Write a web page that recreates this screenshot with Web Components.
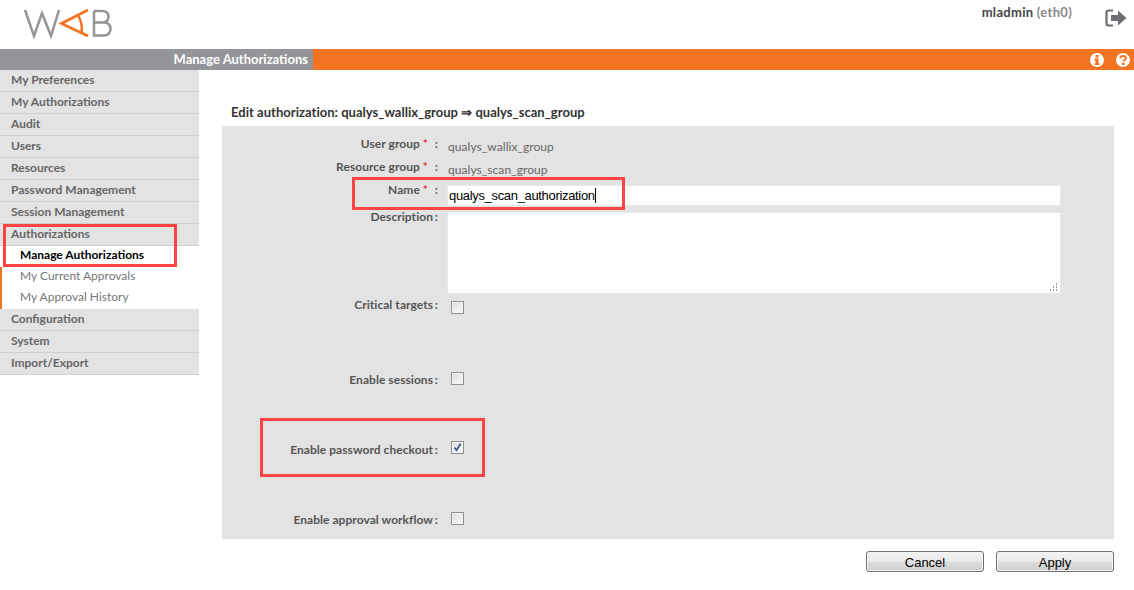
<!DOCTYPE html>
<html>
<head>
<meta charset="utf-8">
<title>WAB</title>
<style>
  html, body { margin: 0; padding: 0; background: #fff; }
  body { width: 1134px; height: 590px; overflow: hidden; position: relative; font-family: "Lato", "Open Sans", sans-serif; }
</style>
</head>
<body>
<wab-app></wab-app>

<template id="form-row-tpl">
  <style>
    :host { display: grid; grid-template-columns: 211px 5px 1fr; height: var(--h, 23px); font: 700 12px/14px "Lato", sans-serif; color: #555; letter-spacing: .05px; }
    .label { text-align: right; padding-top: var(--lt, 4px); white-space: nowrap; }
    .label b { color: #e03030; font-weight: 700; }
    :host([required]) .label { padding-right: 5px; }
    .colon { padding-top: var(--lt, 4px); text-align: right; }
    .value { padding-left: 9px; padding-top: var(--vt, 7px); }
  </style>
  <div class="label"></div>
  <div class="colon">:</div>
  <div class="value"><slot></slot></div>
</template>

<script>
class FormRow extends HTMLElement {
  constructor() {
    super();
    this.attachShadow({ mode: 'open' });
    this.shadowRoot.appendChild(document.getElementById('form-row-tpl').content.cloneNode(true));
  }
  connectedCallback() {
    const label = this.shadowRoot.querySelector('.label');
    label.textContent = this.getAttribute('label');
    if (this.hasAttribute('required')) {
      const star = document.createElement('b');
      star.textContent = ' *';
      label.appendChild(star);
    }
  }
}
customElements.define('form-row', FormRow);

class WabCheck extends HTMLElement {
  constructor() {
    super();
    this.attachShadow({ mode: 'open' });
    this.shadowRoot.innerHTML = `
    <style>
      :host { display: block; width: 13px; height: 13px; box-sizing: border-box; border: 1px solid #8e8f8f; background: linear-gradient(135deg, #dcdcdc, #fbfbfb); box-shadow: inset 0 0 0 1px #f4f4f4; }
      svg { display: block; }
    </style>
    ${this.hasAttribute('checked') ? '<svg width="11" height="11" viewBox="0 0 11 11"><path d="M2.5 5.5L4.6 8.3L8.6 1.8" fill="none" stroke="#3d4f8e" stroke-width="1.7"/></svg>' : ''}`;
  }
}
customElements.define('wab-check', WabCheck);

class WabButton extends HTMLElement {
  constructor() {
    super();
    this.attachShadow({ mode: 'open' });
    this.shadowRoot.innerHTML = `
    <style>
      :host { display: block; width: 118px; height: 21px; box-sizing: border-box; border: 1px solid #707070; border-radius: 3px; background: linear-gradient(#f2f2f2 0, #ebebeb 48%, #dcdcdc 52%, #cfcfcf 100%); box-shadow: inset 0 0 0 1px #f6f6f6; font: 13px/21px "Liberation Sans", sans-serif; color: #000; text-align: center; }
    </style>
    <slot></slot>`;
  }
}
customElements.define('wab-button', WabButton);

class SideMenu extends HTMLElement {
  constructor() {
    super();
    this.attachShadow({ mode: 'open' });
    const main = ['My Preferences', 'My Authorizations', 'Audit', 'Users', 'Resources', 'Password Management', 'Session Management', 'Authorizations'];
    const sub = ['Manage Authorizations', 'My Current Approvals', 'My Approval History'];
    const rest = ['Configuration', 'System', 'Import/Export'];
    const head = t => `<div class="head">${t}</div>`;
    this.shadowRoot.innerHTML = `
    <style>
      :host { display: block; width: 199px; flex: none; font: 700 12px/14px "Lato", sans-serif; }
      .head { height: 22px; box-sizing: border-box; padding: 3px 0 0 11px; background: #e3e3e3; border-bottom: 1px solid #cfcfcf; color: #666; }
      .sub { height: 21px; box-sizing: border-box; padding: 2px 0 0 18px; border-left: 2px solid #f47321; color: #777; font-weight: 400; }
      .sub.on { color: #000; font-weight: 700; border-left-color: transparent; }
    </style>
    ${main.map(head).join('')}
    ${sub.map((t, i) => `<div class="sub${i ? '' : ' on'}">${t}</div>`).join('')}
    ${rest.map(head).join('')}`;
  }
}
customElements.define('side-menu', SideMenu);

class TopHeader extends HTMLElement {
  constructor() {
    super();
    this.attachShadow({ mode: 'open' });
    this.shadowRoot.innerHTML = `
    <style>
      :host { display: flex; height: 49px; justify-content: space-between; font: 700 13px/14px "Lato", sans-serif; }
      .logo { margin: 8px 0 0 23px; display: block; }
      .right { display: flex; align-items: flex-start; }
      .user { margin: 5px 33px 0 0; color: #444; letter-spacing: .3px; }
      .user span { color: #888; }
      .out { margin: 9px 7px 0 0; display: block; }
    </style>
    <svg class="logo" width="90" height="31" viewBox="0 0 90 31">
      <path d="M2 2L11 28L19 5L28 28L36 2" fill="none" stroke="#939598" stroke-width="2.500"/>
      <path d="M65 2L38.500 15.500L65 28" fill="none" stroke="#f47321" stroke-width="2.800"/>
      <path d="M55 7Q60 16 58.500 25" fill="none" stroke="#f47321" stroke-width="2.500"/>
      <path d="M71 3V27.500H80Q87.500 27.500 87.500 21Q87.500 14.500 80 14.500H71M80 14.500Q85.500 14 85.500 8.500Q85.500 3 79 3H71" fill="none" stroke="#939598" stroke-width="2.500"/>
    </svg>
    <div class="right">
      <div class="user">mladmin <span>(eth0)</span></div>
      <svg class="out" width="22" height="18" viewBox="0 0 22 18">
        <path d="M8 1.500H3.500Q1.500 1.500 1.500 3.500V14.500Q1.500 16.500 3.500 16.500H8" fill="none" stroke="#6d6e71" stroke-width="2.200"/>
        <path d="M6 6H13V1.500L21.500 9L13 16.500V12H6Z" fill="#6d6e71"/>
      </svg>
    </div>`;
  }
}
customElements.define('top-header', TopHeader);

class TitleBar extends HTMLElement {
  constructor() {
    super();
    this.attachShadow({ mode: 'open' });
    this.shadowRoot.innerHTML = `
    <style>
      :host { display: flex; height: 21px; background: #f47321; font: 700 13px/20px "Lato", sans-serif; color: #fff; }
      .crumb { width: 313px; box-sizing: border-box; background: #939598; text-align: right; padding-right: 5px; }
      .icons { margin-left: auto; display: flex; gap: 12px; padding: 4px 4px 0 0; }
      svg { display: block; }
    </style>
    <div class="crumb">Manage Authorizations</div>
    <div class="icons">
      <svg width="14" height="14" viewBox="0 0 14 14"><circle cx="7" cy="7" r="7" fill="#fff"/><rect x="5.500" y="2" width="3" height="2.500" fill="#f47321"/><path d="M4.500 5.500H8.500V10.200H9.500V12H4.500V10.200H5.500V7.300H4.500Z" fill="#f47321"/></svg>
      <svg width="14" height="14" viewBox="0 0 14 14"><circle cx="7" cy="7" r="7" fill="#fff"/><path d="M4.200 5.300Q4.500 3 7.100 3Q9.800 3 9.800 5.200Q9.800 6.500 8.300 7.200Q7.400 7.700 7.400 8.600" fill="none" stroke="#f47321" stroke-width="2"/><rect x="5.900" y="9.700" width="2.600" height="2.300" fill="#f47321"/></svg>
    </div>`;
  }
}
customElements.define('title-bar', TitleBar);

class AuthForm extends HTMLElement {
  constructor() {
    super();
    this.attachShadow({ mode: 'open' });
    this.shadowRoot.innerHTML = `
    <style>
      :host { display: block; flex: 1; padding: 35px 20px 0 23px; font: 700 12px/14px "Lato", sans-serif; }
      h2 { margin: 0; padding-left: 9px; font: 700 13px/14px "Lato", sans-serif; color: #333; height: 21px; letter-spacing: .03px; }
      .panel { background: #e3e3e3; height: 413px; padding-top: 7px; box-sizing: border-box; }
      .static { display: block; padding-left: 1px; font: 400 12px/14px "Lato", sans-serif; color: #666; }
      .input { box-sizing: border-box; width: 614px; background: #fff; border: 1px solid #e9e9e9; font: 13px/19px "Liberation Sans", sans-serif; color: #000; padding-left: 1px; letter-spacing: -.33px; }
      .line { height: 21px; margin-top: 6px; }
      .line i { display: inline-block; width: 1px; height: 15px; background: #000; vertical-align: -3px; }
      .area { height: 82px; position: relative; }
      .grip { position: absolute; right: 2px; bottom: 2px; }
      wab-check { margin-left: 4px; margin-top: var(--ct, 0); }
      .actions { display: flex; justify-content: flex-end; gap: 12px; margin-top: 12px; }
    </style>
    <h2>Edit authorization: qualys_wallix_group ⇒ qualys_scan_group</h2>
    <div class="panel">
      <form-row label="User group" required><span class="static">qualys_wallix_group</span></form-row>
      <form-row label="Resource group" required><span class="static">qualys_scan_group</span></form-row>
      <form-row label="Name" required style="--h:31px;--vt:0;--lt:4px"><div class="input line">qualys_scan_authorization<i></i></div></form-row>
      <form-row label="Description" style="--h:88px;--vt:2px;--lt:0"><div class="input area">
        <svg class="grip" width="8" height="8" viewBox="0 0 8 8" fill="#999"><rect x="6" y="0" width="1" height="2"/><rect x="3" y="3" width="1" height="2"/><rect x="6" y="3" width="1" height="2"/><rect x="0" y="6" width="1" height="2"/><rect x="3" y="6" width="1" height="2"/><rect x="6" y="6" width="1" height="2"/></svg>
      </div></form-row>
      <form-row label="Critical targets" style="--h:75px;--vt:0;--lt:0;--ct:3px"><wab-check></wab-check></form-row>
      <form-row label="Enable sessions" style="--h:70px;--vt:0;--lt:0;--ct:-1px"><wab-check></wab-check></form-row>
      <form-row label="Enable password checkout" style="--h:70px;--vt:0;--lt:0;--ct:-2px"><wab-check checked></wab-check></form-row>
      <form-row label="Enable approval workflow" style="--h:26px;--vt:0;--lt:0;--ct:-1px"><wab-check></wab-check></form-row>
    </div>
    <div class="actions"><wab-button>Cancel</wab-button><wab-button>Apply</wab-button></div>`;
  }
}
customElements.define('auth-form', AuthForm);

class RedMark extends HTMLElement {
  constructor() {
    super();
    this.attachShadow({ mode: 'open' });
    this.shadowRoot.innerHTML = `<style>:host { display: block; position: absolute; box-sizing: border-box; border: 3px solid #fb4545; pointer-events: none; }</style>`;
  }
}
customElements.define('red-mark', RedMark);

class WabApp extends HTMLElement {
  constructor() {
    super();
    this.attachShadow({ mode: 'open' });
    this.shadowRoot.innerHTML = `
    <style>
      :host { display: block; position: relative; width: 1134px; height: 590px; }
      .body { display: flex; align-items: flex-start; }
    </style>
    <top-header></top-header>
    <title-bar></title-bar>
    <div class="body"><side-menu></side-menu><auth-form></auth-form></div>
    <red-mark style="left:3px;top:224px;width:174px;height:43px"></red-mark>
    <red-mark style="left:352px;top:177px;width:273px;height:33px"></red-mark>
    <red-mark style="left:260px;top:418px;width:225px;height:59px"></red-mark>`;
  }
}
customElements.define('wab-app', WabApp);
</script>
</body>
</html>
